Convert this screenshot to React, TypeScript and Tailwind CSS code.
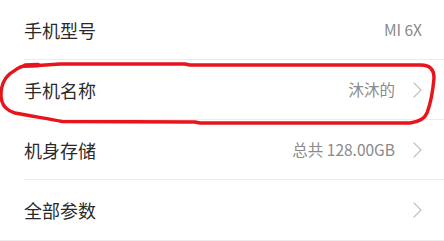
import React from "react";

const rows = [
  { label: "手机型号", value: "MI 6X", arrow: false },
  { label: "手机名称", value: "沐沐的", arrow: true },
  { label: "机身存储", value: "总共 128.00GB", arrow: true },
  { label: "全部参数", value: "", arrow: true },
];

function Chevron() {
  return (
    <svg width="9" height="16" viewBox="0 0 9 16" className="ml-[18px] shrink-0">
      <path d="M1 1 L8 8 L1 15" fill="none" stroke="#c4c4c4" strokeWidth="1.3" strokeLinecap="round" strokeLinejoin="round" />
    </svg>
  );
}

export default function App() {
  return (
    <div
      className="relative w-[444px] h-[241px] overflow-hidden bg-white"
      style={{ fontFamily: '"Noto Sans CJK SC", "Noto Sans", sans-serif' }}
    >
      <div className="flex flex-col border-b border-[#ececec]">
        {rows.map((r, i) => (
          <div key={r.label} className="pl-6">
            <div
              className={
                "flex items-center h-[60px] pr-[22px] " +
                (i < rows.length - 1 ? "border-b border-[#ececec]" : "")
              }
            >
              <span className="text-[18px] text-[#2a2a2a] leading-none">{r.label}</span>
              <span className="ml-auto text-[15.5px] text-[#8a8a8a] leading-none">{r.value}</span>
              {r.arrow && <Chevron />}
            </div>
          </div>
        ))}
      </div>
      <svg className="absolute left-0 top-0 pointer-events-none" width="444" height="241" viewBox="0 0 444 241">
        <path
          d="M25 66 L38 65.5 L60 64 L185 64 L190 65 L421 65 C430 65 434 70 434 78 C433 90 430 105 427 113 C424 120 418 122 410 123 L200 123 L195 122 L62 121.5 C50 119 30 116 15 113 C5 110 1 103 1 95 C1 85 5 76 14 71 C18 68 22 66 25 66 Z"
          fill="none"
          stroke="#e8141c"
          strokeWidth="3.4"
          strokeLinejoin="round"
        />
        <path d="M25 65.5 L38 65" stroke="#e8141c" strokeWidth="4.5" strokeLinecap="round" />
      </svg>
    </div>
  );
}
